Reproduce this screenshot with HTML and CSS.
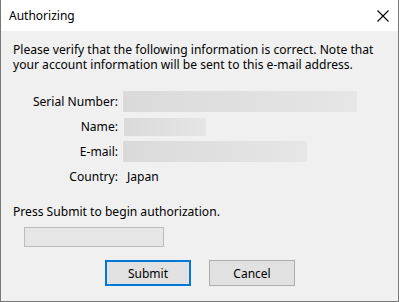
FILE: index.html
```html
<!DOCTYPE html>
<html lang="en">
<head>
    <meta charset="UTF-8">
    <title>Authorizing</title>
    <link rel="stylesheet" href="styles.css">
</head>
<body>
    <div class="window">
        <header class="titlebar">
            <span class="title">Authorizing</span>
            <button class="close-btn" aria-label="Close">
                <svg width="12" height="12" viewBox="0 0 12 12">
                    <path d="M0.5 0.5 L11.5 11.5 M11.5 0.5 L0.5 11.5" stroke="#000" stroke-width="1.1" fill="none"/>
                </svg>
            </button>
        </header>

        <div class="content">
            <p class="intro">Please verify that the following information is correct. Note that your account information will be sent to this e-mail address.</p>

            <div class="fields">
                <span class="label">Serial Number:</span>
                <div class="blur serial"></div>
                <span class="label">Name:</span>
                <div class="blur name"></div>
                <span class="label">E-mail:</span>
                <div class="blur email"></div>
                <span class="label">Country:</span>
                <span class="value">Japan</span>
            </div>

            <p class="hint">Press Submit to begin authorization.</p>
            <div class="progress"></div>

            <div class="buttons">
                <button class="btn btn-default">Submit</button>
                <button class="btn">Cancel</button>
            </div>
        </div>
    </div>
</body>
</html>
```

FILE: styles.css
```css
* {
    box-sizing: border-box;
    margin: 0;
    padding: 0;
}

body {
    font-family: 'Noto Sans', 'Open Sans', sans-serif;
    font-size: 12.1px;
    color: #000;
    background: #fff;
}

.window {
    width: 399px;
    height: 302px;
    border: 1px solid #777;
    border-top: none;
    background-color: #f0f0f0;
    display: flex;
    flex-direction: column;
}

.titlebar {
    height: 31px;
    background-color: #fff;
    display: flex;
    align-items: center;
    justify-content: space-between;
    padding-left: 8px;
    padding-right: 8px;
}

.title {
    font-size: 12px;
}

.close-btn {
    background: none;
    border: none;
    width: 14px;
    height: 14px;
    display: flex;
    align-items: center;
    justify-content: center;
}

.content {
    padding: 11px 12px 0 12px;
}

.intro {
    line-height: 15px;
}

.fields {
    display: grid;
    grid-template-columns: 105px 1fr;
    grid-auto-rows: 25px;
    column-gap: 5px;
    align-items: center;
    margin-top: 17px;
}

.label {
    text-align: right;
}

.value {
    padding-left: 4px;
}

.blur {
    background: linear-gradient(90deg, #dadada, #e2e2e2 70%, #e6e6e6);
    border-radius: 1px;
}

.blur.serial {
    width: 234px;
    height: 21px;
}

.blur.name {
    width: 82px;
    height: 18px;
    margin-left: 1px;
}

.blur.email {
    width: 184px;
    height: 21px;
}

.hint {
    margin-top: 15px;
    line-height: 15px;
}

.progress {
    width: 140px;
    height: 20px;
    margin-top: 8px;
    margin-left: 11px;
    background-color: #e6e6e6;
    border: 1px solid #bcbcbc;
}

.buttons {
    display: flex;
    gap: 18px;
    margin-top: 13px;
    padding-left: 92px;
}

.btn {
    width: 86px;
    height: 26px;
    font-family: inherit;
    font-size: 12px;
    color: #000;
    background-color: #e1e1e1;
    border: 1px solid #adadad;
}

.btn-default {
    border: 2px solid #0078d7;
}
```
